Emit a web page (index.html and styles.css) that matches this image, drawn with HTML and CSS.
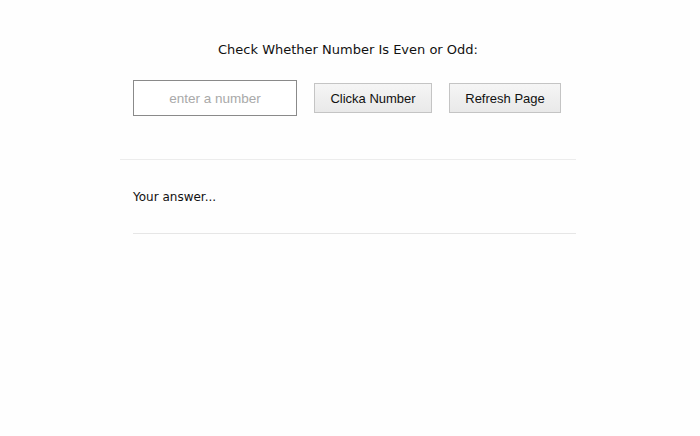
FILE: index.html
```html
<!DOCTYPE html>
<html>
<head>
<meta charset="utf-8">
<link rel="stylesheet" href="styles.css">
</head>
<body>
<div class="wrap">
  <h1 class="title">Check Whether Number Is Even or Odd:</h1>
  <div class="controls">
    <input class="num" type="text" placeholder="enter a number">
    <button class="btn btn-click">Clicka Number</button>
    <button class="btn btn-refresh">Refresh Page</button>
  </div>
  <hr class="rule-top">
  <div class="answer">
    <p class="answer-text">Your answer...</p>
    <hr class="rule-bottom">
  </div>
</div>
</body>
</html>
```
FILE: styles.css
```css
html, body {
  margin: 0;
  padding: 0;
  background: #fefefe;
}
body {
  width: 700px;
  height: 436px;
  font-family: "DejaVu Sans", Verdana, sans-serif;
  color: #111;
}
.wrap {
  width: 456px;
  margin-left: 120px;
  padding-top: 41px;
}
.title {
  margin: 0;
  font-size: 13px;
  font-weight: normal;
  text-align: center;
  line-height: 18px;
}
.controls {
  display: flex;
  align-items: flex-start;
  padding-left: 13px;
  margin-top: 21px;
}
.num {
  box-sizing: border-box;
  width: 164px;
  height: 36px;
  border: 1px solid #8a8a8a;
  border-radius: 0;
  background: #fff;
  font-family: "Liberation Sans", Arial, sans-serif;
  font-size: 13.5px;
  text-align: center;
  padding: 0;
  margin: 0;
  outline: none;
}
.num::placeholder {
  color: #a9a9a9;
}
.btn {
  box-sizing: border-box;
  height: 30px;
  border: 1px solid #c4c4c4;
  border-radius: 0;
  background: linear-gradient(#f5f5f5, #e9e9e9);
  font-family: "Liberation Sans", Arial, sans-serif;
  font-size: 13px;
  color: #111;
  padding: 0;
  margin: 3px 0 0 0;
}
.btn-click {
  width: 118px;
  margin-left: 17px;
}
.btn-refresh {
  width: 112px;
  margin-left: 17px;
}
.rule-top {
  margin: 43px 0 0 0;
  border: 0;
  border-top: 1px solid #ececec;
  height: 0;
}
.answer {
  padding-left: 13px;
}
.answer-text {
  margin: 0;
  padding-top: 29px;
  font-size: 12px;
  line-height: 16px;
}
.rule-bottom {
  margin: 28px 0 0 0;
  border: 0;
  border-top: 1px solid #e6e6e6;
  height: 0;
}
```
